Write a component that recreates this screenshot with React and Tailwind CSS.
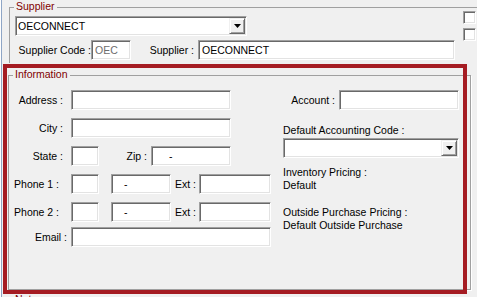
import React from 'react';

const sunken =
  'border border-t-[#a0a0a0] border-l-[#a0a0a0] border-b-white border-r-white shadow-[inset_1px_1px_0_#696969,inset_-1px_-1px_0_#e3e3e3]';

const Box = ({ className = '', children }) => (
  <div className={`h-[20px] bg-white ${sunken} flex items-center pl-[3px] ${className}`}>{children}</div>
);

const Combo = ({ className = '', children }) => (
  <div className={`h-[20px] bg-white ${sunken} flex items-center pl-[2px] pr-[1px] ${className}`}>
    <span className="flex-1">{children}</span>
    <span className="w-[16px] h-[16px] bg-[#f0f0f0] border border-t-[#f0f0f0] border-l-[#f0f0f0] border-b-[#696969] border-r-[#696969] shadow-[inset_1px_1px_0_white,inset_-1px_-1px_0_#a0a0a0] flex items-center justify-center">
      <svg width="7" height="4" viewBox="0 0 7 4">
        <path d="M0 0h7L3.5 4z" fill="#000" />
      </svg>
    </span>
  </div>
);

const Check = () => (
  <div className={`w-[13px] h-[13px] bg-white ${sunken}`} />
);

const Group = ({ title, className = '', children }) => (
  <div className={`relative border border-[#a0a0a0] ${className}`}>
    <span className="absolute -top-[8px] left-[4px] px-[2px] bg-[#f0f0f0] text-[#800000] leading-[13px]">
      {title}
    </span>
    {children}
  </div>
);

const Label = ({ className = '', children }) => (
  <div className={`shrink-0 text-right ${className}`}>{children}</div>
);

export default function App() {
  return (
    <div className="relative w-[477px] h-[297px] overflow-hidden bg-[#f0f0f0] text-black text-[10.5px] leading-[13px] font-['Liberation_Sans',Arial,sans-serif] shadow-[inset_1px_0_0_white,inset_2px_0_0_#8fa6c6]">
      {/* Supplier */}
      <Group title="Supplier" className="mt-[7px] ml-[9px] w-[480px] h-[56px] border-b-0 border-r-0">
        <div className="flex">
          <div className="w-[445px] pt-[8px]">
            <Combo className="ml-[5px] w-[232px]">OECONNECT</Combo>
            <div className="flex items-center mt-[4px]">
              <Label className="w-[81px] text-left pl-[6px]">Supplier Code :</Label>
              <Box className="w-[40px] bg-[#f0f0f0] text-[#6d6d6d]">OEC</Box>
              <Label className="w-[67px] pr-[4px]">Supplier :</Label>
              <Box className="w-[257px]">OECONNECT</Box>
            </div>
          </div>
          <div className="flex flex-col gap-[4px] pt-[3px] ml-[8px]">
            <Check />
            <Check />
          </div>
        </div>
      </Group>

      {/* Information */}
      <Group title="Information" className="mt-[12px] ml-[8px] w-[463px] h-[215px] shadow-[1px_1px_0_white]">
        <div className="flex pt-[14px]">
          <div className="w-[262px] flex flex-col">
            <div className="flex items-center">
              <Label className="w-[62px] pr-[8px]">Address :</Label>
              <Box className="w-[160px]" />
            </div>
            <div className="flex items-center mt-[8px]">
              <Label className="w-[62px] pr-[8px]">City :</Label>
              <Box className="w-[160px]" />
            </div>
            <div className="flex items-center mt-[8px]">
              <Label className="w-[62px] pr-[8px]">State :</Label>
              <Box className="w-[28px]" />
              <Label className="w-[52px] pr-[4px]">Zip :</Label>
              <Box className="w-[80px] pl-[17px]">-</Box>
            </div>
            {['Phone 1 :', 'Phone 2 :'].map((p) => (
              <div key={p} className="flex items-center mt-[8px]">
                <Label className="w-[62px] pr-[12px]">{p}</Label>
                <Box className="w-[28px]" />
                <Box className="w-[60px] ml-[12px] pl-[12px]">-</Box>
                <Label className="w-[28px] pr-[3px]">Ext :</Label>
                <Box className="w-[72px]" />
              </div>
            ))}
            <div className="flex items-center mt-[5px]">
              <Label className="w-[62px] pr-[4px]">Email :</Label>
              <Box className="w-[200px]" />
            </div>
          </div>

          <div className="ml-[12px] w-[176px] flex flex-col">
            <div className="flex items-center">
              <Label className="w-[56px] pr-[4px]">Account :</Label>
              <Box className="w-[120px]" />
            </div>
            <div className="mt-[14px]">Default Accounting Code :</div>
            <Combo className="mt-[1px] w-[176px]" />
            <div className="mt-[8px]">Inventory Pricing :</div>
            <div>Default</div>
            <div className="mt-[14px]">Outside Purchase Pricing :</div>
            <div>Default Outside Purchase</div>
          </div>
        </div>
      </Group>

      {/* Notes */}
      <Group title="Notes" className="mt-[10px] ml-[8px] w-[463px] h-[60px]" />

      {/* highlight */}
      <div className="absolute left-[3px] top-[64px] w-[464px] h-[230px] border-4 border-[#a51c23] pointer-events-none" />
    </div>
  );
}
